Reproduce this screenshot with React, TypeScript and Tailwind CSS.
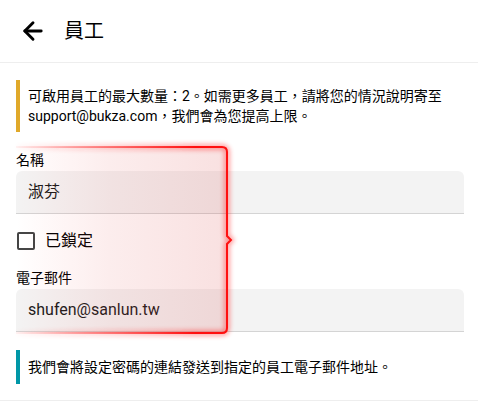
import React from "react";
import { ArrowLeft } from "lucide-react";

const font = { fontFamily: "Roboto, 'Noto Sans CJK TC', sans-serif" };

const Highlight = () => {
  const d =
    "M16,147 H222 Q227,147 227,152 V236 L231,240 L227,244 V328 Q227,333 222,333 H16";
  return (
    <svg
      className="absolute left-0 top-0 pointer-events-none"
      width="478"
      height="401"
      viewBox="0 0 478 401"
    >
      <defs>
        <linearGradient id="hlFill" x1="16" y1="0" x2="227" y2="0" gradientUnits="userSpaceOnUse">
          <stop offset="0" stopColor="#ff3b3b" stopOpacity="0" />
          <stop offset="0.45" stopColor="#e04848" stopOpacity="0.1" />
          <stop offset="1" stopColor="#d84040" stopOpacity="0.16" />
        </linearGradient>
        <linearGradient id="hlStroke" x1="16" y1="0" x2="227" y2="0" gradientUnits="userSpaceOnUse">
          <stop offset="0" stopColor="#ff2020" stopOpacity="0.05" />
          <stop offset="0.5" stopColor="#ff2020" stopOpacity="0.6" />
          <stop offset="0.85" stopColor="#ff1010" stopOpacity="1" />
        </linearGradient>
        <filter id="hlBlur" x="-20%" y="-20%" width="140%" height="140%">
          <feGaussianBlur stdDeviation="2.5" />
        </filter>
      </defs>
      <path d={d + " Z"} fill="url(#hlFill)" stroke="none" />
      <path d={d} fill="none" stroke="url(#hlStroke)" strokeWidth="5" opacity="0.45" filter="url(#hlBlur)" />
      <path d={d} fill="none" stroke="url(#hlStroke)" strokeWidth="2" />
    </svg>
  );
};

const Field = ({ label, value }: { label: string; value: string }) => (
  <div className="flex flex-col">
    <div className="text-sm leading-5 text-black">{label}</div>
    <div className="mt-[1px] h-[43px] flex items-center pl-3 bg-[#f3f3f3] rounded-t-md border-b border-[#d4d4d4] text-base text-[#1a1a1a]">
      {value}
    </div>
  </div>
);

export default function App() {
  return (
    <div className="relative w-[478px] h-[401px] bg-white overflow-hidden" style={font}>
      <div className="h-[63px] flex items-center border-b border-[#eeeeee]">
        <ArrowLeft className="ml-[19px] text-black" size={28} strokeWidth={2.5} />
        <div className="ml-[17px] text-xl text-black">員工</div>
      </div>

      <div className="pl-4 pr-[14px] pt-[17px] flex flex-col">
        <div className="border-l-4 border-[#e0a92a] pl-2 py-[6px] text-sm leading-5 text-black">
          可啟用員工的最大數量：2。如需更多員工，請將您的情況說明寄至
          <br />
          support@bukza.com，我們會為您提高上限。
        </div>

        <div className="mt-[18px]">
          <Field label="名稱" value="淑芬" />
        </div>

        <div className="mt-[17px] flex items-center h-[20px]">
          <div className="ml-[1px] w-[18px] h-[18px] border-2 border-[#444] rounded-[2px]" />
          <div className="ml-[10px] text-base text-black">已鎖定</div>
        </div>

        <div className="mt-[17px]">
          <Field label="電子郵件" value="shufen@sanlun.tw" />
        </div>

        <div className="mt-[18px] border-l-4 border-[#0097a7] pl-2 py-[7px] text-sm leading-5 text-black">
          我們會將設定密碼的連結發送到指定的員工電子郵件地址。
        </div>
      </div>

      <div className="absolute left-0 right-0 top-[400px] border-t border-[#eeeeee]" />
      <Highlight />
    </div>
  );
}
